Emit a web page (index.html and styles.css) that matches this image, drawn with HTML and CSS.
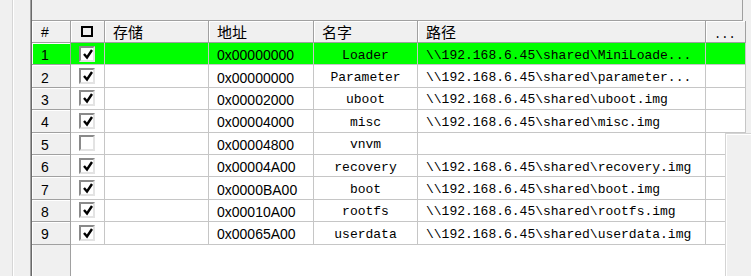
FILE: index.html
```html
<!DOCTYPE html>
<html lang="zh-CN">
<head>
    <meta charset="UTF-8">
    <meta name="viewport" content="width=device-width, initial-scale=1.0">
    <title>分区列表</title>
    <link rel="stylesheet" href="styles.css">
</head>
<body>
    <div class="window">
        <div class="side"></div>
        <div class="frame">
            <div class="grid">
                <div class="caption"></div>

                <div class="row head">
                    <div class="cell num">#</div>
                    <div class="cell chk"><span class="allbox"></span></div>
                    <div class="cell">存储</div>
                    <div class="cell">地址</div>
                    <div class="cell">名字</div>
                    <div class="cell">路径</div>
                    <div class="cell more">...</div>
                </div>

                <div class="row sel">
                    <div class="cell num">1</div>
                    <div class="cell chk"><span class="box"><svg viewBox="0 0 12 12"><path d="M3 6 L6 9.5 L11 2"/></svg></span></div>
                    <div class="cell"></div>
                    <div class="cell addr">0x00000000</div>
                    <div class="cell name">Loader</div>
                    <div class="cell path">\\192.168.6.45\shared\MiniLoade...</div>
                    <div class="cell"></div>
                </div>
                <div class="row">
                    <div class="cell num">2</div>
                    <div class="cell chk"><span class="box"><svg viewBox="0 0 12 12"><path d="M3 6 L6 9.5 L11 2"/></svg></span></div>
                    <div class="cell"></div>
                    <div class="cell addr">0x00000000</div>
                    <div class="cell name">Parameter</div>
                    <div class="cell path">\\192.168.6.45\shared\parameter...</div>
                    <div class="cell"></div>
                </div>
                <div class="row">
                    <div class="cell num">3</div>
                    <div class="cell chk"><span class="box"><svg viewBox="0 0 12 12"><path d="M3 6 L6 9.5 L11 2"/></svg></span></div>
                    <div class="cell"></div>
                    <div class="cell addr">0x00002000</div>
                    <div class="cell name">uboot</div>
                    <div class="cell path">\\192.168.6.45\shared\uboot.img</div>
                    <div class="cell"></div>
                </div>
                <div class="row">
                    <div class="cell num">4</div>
                    <div class="cell chk"><span class="box"><svg viewBox="0 0 12 12"><path d="M3 6 L6 9.5 L11 2"/></svg></span></div>
                    <div class="cell"></div>
                    <div class="cell addr">0x00004000</div>
                    <div class="cell name">misc</div>
                    <div class="cell path">\\192.168.6.45\shared\misc.img</div>
                    <div class="cell"></div>
                </div>
                <div class="row">
                    <div class="cell num">5</div>
                    <div class="cell chk"><span class="box"></span></div>
                    <div class="cell"></div>
                    <div class="cell addr">0x00004800</div>
                    <div class="cell name">vnvm</div>
                    <div class="cell path"></div>
                    <div class="cell"></div>
                </div>
                <div class="row">
                    <div class="cell num">6</div>
                    <div class="cell chk"><span class="box"><svg viewBox="0 0 12 12"><path d="M3 6 L6 9.5 L11 2"/></svg></span></div>
                    <div class="cell"></div>
                    <div class="cell addr">0x00004A00</div>
                    <div class="cell name">recovery</div>
                    <div class="cell path">\\192.168.6.45\shared\recovery.img</div>
                    <div class="cell"></div>
                </div>
                <div class="row">
                    <div class="cell num">7</div>
                    <div class="cell chk"><span class="box"><svg viewBox="0 0 12 12"><path d="M3 6 L6 9.5 L11 2"/></svg></span></div>
                    <div class="cell"></div>
                    <div class="cell addr">0x0000BA00</div>
                    <div class="cell name">boot</div>
                    <div class="cell path">\\192.168.6.45\shared\boot.img</div>
                    <div class="cell"></div>
                </div>
                <div class="row">
                    <div class="cell num">8</div>
                    <div class="cell chk"><span class="box"><svg viewBox="0 0 12 12"><path d="M3 6 L6 9.5 L11 2"/></svg></span></div>
                    <div class="cell"></div>
                    <div class="cell addr">0x00010A00</div>
                    <div class="cell name">rootfs</div>
                    <div class="cell path">\\192.168.6.45\shared\rootfs.img</div>
                    <div class="cell"></div>
                </div>
                <div class="row">
                    <div class="cell num">9</div>
                    <div class="cell chk"><span class="box"><svg viewBox="0 0 12 12"><path d="M3 6 L6 9.5 L11 2"/></svg></span></div>
                    <div class="cell"></div>
                    <div class="cell addr">0x00065A00</div>
                    <div class="cell name">userdata</div>
                    <div class="cell path">\\192.168.6.45\shared\userdata.img</div>
                    <div class="cell"></div>
                </div>

                <div class="filler">
                    <div class="filler-num"></div>
                    <div class="filler-rest"></div>
                </div>
            </div>
        </div>
        <div class="panel"></div>
    </div>
</body>
</html>
```

FILE: styles.css
```css
html, body {
    margin: 0;
    height: 100%;
}
body {
    background-color: #f0f0f0;
    font-family: "Liberation Sans", Arial, sans-serif;
    font-size: 14px;
    color: #000;
    overflow: hidden;
}
.window {
    display: flex;
    height: 276px;
    position: relative;
}
.side {
    width: 12px;
    border-right: 1px solid #d6d6d6;
    box-shadow: 1px 0 0 #fff;
    margin-right: 17px;
    flex: none;
}
.frame {
    flex: 1;
    display: flex;
    border-left: 1px solid #a0a0a0;
}
.grid {
    flex: 1;
    display: flex;
    flex-direction: column;
    border-left: 1px solid #696969;
}
.caption {
    flex: none;
    width: 710px;
    height: 20px;
    border-right: 1px solid #a0a0a0;
    border-bottom: 1px solid #a0a0a0;
}
.row {
    flex: none;
    display: grid;
    grid-template-columns: 39px 34px 104px 105px 104px 288px 40px;
    width: 714px;
    height: 22.4px;
}
.cell {
    box-sizing: border-box;
    display: flex;
    align-items: center;
    padding-left: 8px;
    padding-top: 3px;
    background-color: #fff;
    border-right: 1px solid #c6c6c6;
    border-bottom: 1px solid #c6c6c6;
    white-space: nowrap;
    overflow: hidden;
}
.cell.chk {
    padding-top: 0;
}
.cell.num {
    padding-left: 9px;
    background-color: #f0f0f0;
    border-right-color: #a0a0a0;
    border-bottom-color: #a0a0a0;
    box-shadow: inset 1px 1px 0 #fff;
}
.head {
    height: 22px;
}
.head .cell {
    padding-top: 0;
    background-color: #f0f0f0;
    border-right-color: #a0a0a0;
    border-bottom-color: #a0a0a0;
    box-shadow: inset 1px 1px 0 #fff;
    font-family: "Noto Sans CJK SC", "Liberation Sans", sans-serif;
    font-size: 15px;
}
.head .cell.num {
    font-family: "Liberation Sans", Arial, sans-serif;
    font-size: 14px;
}
.head .more {
    font-family: "Liberation Mono", monospace;
    font-size: 12px;
    padding-top: 6px;
}
.sel .cell {
    background-color: #00ff00;
}
.allbox {
    display: block;
    width: 12px;
    height: 11px;
    margin-left: 2px;
    box-sizing: border-box;
    border: 2px solid #000;
}
.box {
    display: block;
    width: 16px;
    height: 16px;
    box-sizing: border-box;
    border: 2px solid;
    border-color: #8a8a8a #e3e3e3 #e3e3e3 #8a8a8a;
    background-color: #fff;
}
.box svg {
    display: block;
    width: 12px;
    height: 12px;
}
.box path {
    fill: none;
    stroke: #000;
    stroke-width: 2.4;
}
.name, .path {
    font-family: "Liberation Mono", monospace;
    font-size: 13px;
}
.name {
    justify-content: center;
    padding-left: 0;
}
.filler {
    flex: 1;
    display: flex;
}
.filler-num {
    width: 39px;
    box-sizing: border-box;
    background-color: #f0f0f0;
    border-right: 1px solid #a0a0a0;
    box-shadow: inset 1px 0 0 #fff;
}
.filler-rest {
    width: 675px;
    background-color: #fff;
}
.panel {
    position: absolute;
    left: 725px;
    top: 133px;
    right: 0;
    bottom: 0;
    background-color: #f0f0f0;
    border-left: 1px solid #d4d4d4;
    border-top: 1px solid #d4d4d4;
    box-shadow: inset 1px 1px 0 #fff;
}
```
